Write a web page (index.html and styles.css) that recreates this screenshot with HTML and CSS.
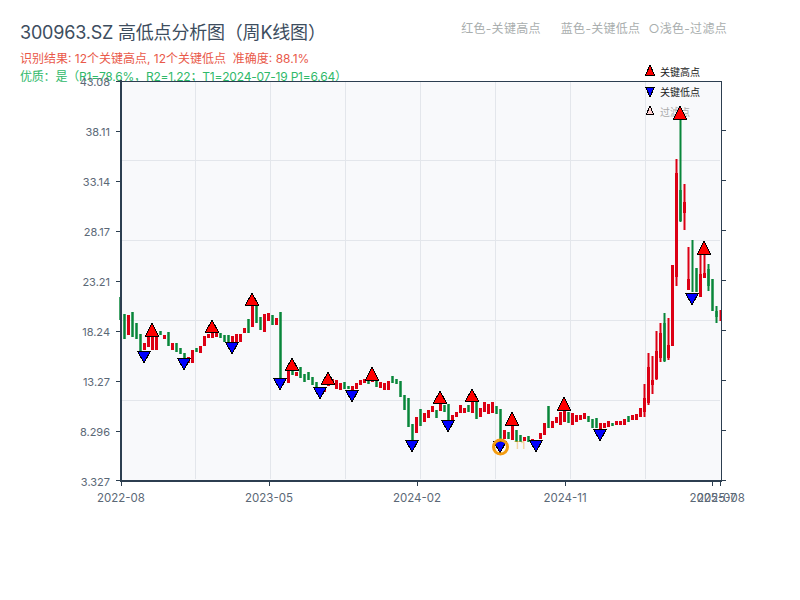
FILE: index.html
```html
<!DOCTYPE html>
<html lang="zh-CN">
<head>
    <meta charset="UTF-8">
    <meta name="viewport" content="width=device-width, initial-scale=1.0">
    <title>300963.SZ 高低点分析图</title>
    <link rel="stylesheet" href="styles.css">
</head>
<body>
    <div class="page">
        <div class="header">
            <div class="title-row">
                <h1 class="title">300963.SZ 高低点分析图（周K线图）</h1>
                <div class="top-legend">
                    <span>红色-关键高点</span>
                    <span>蓝色-关键低点</span>
                    <span class="filter-note">○浅色-过滤点</span>
                </div>
            </div>
            <div class="result-line">识别结果: 12个关键高点, 12个关键低点 &nbsp;准确度: 88.1%</div>
            <div class="quality-line">优质：是（R1=78.6%，R2=1.22；T1=2024-07-19 P1=6.64）</div>
        </div>

        <svg class="chart" width="800" height="520" viewBox="0 80 800 520">
            <!-- plot background and grid -->
            <rect class="plot-bg" x="121" y="81" width="600" height="399"/>
            <path class="grid" d="M122 160.5H720M122 240.5H720M122 320.5H720M122 400.5H720M195.5 82V479M270.5 82V479M345.5 82V479M420.5 82V479M495.5 82V479M570.5 82V479M645.5 82V479"/>

            <!-- inner legend -->
            <polygon class="mark-up" points="650,65 654.500,75 645.500,75"/>
            <text class="legend-text" x="660" y="76">关键高点</text>
            <polygon class="mark-down" points="645.500,87 654.500,87 650,97"/>
            <text class="legend-text" x="660" y="96">关键低点</text>
            <polygon class="mark-filter" points="650,106 653.500,114 646.500,114"/>
            <text class="legend-text legend-muted" x="660" y="116">过滤点</text>

            <!-- candles -->
            <g class="candles-green">
                <path class="wick" d="M664.500 313V362M680.500 112V222M692.500 240V292M708.500 264V291M716.500 306V323"/>
                <path class="body" d="M120.500 297V320M124.500 314V339M132.500 312V337M136.500 323V339M140.500 334V352M160.500 331V335M168.500 332V346M176.500 343V352M180.500 348V354M184.500 353V360M196.500 348V352M220.500 333V338M224.500 335V342M228.500 335V343M248.500 319V333M256.500 306V323M260.500 317V330M272.500 315V325M280.500 312V378M292.500 370V375M300.500 367V378M304.500 374V382M308.500 372V380M312.500 377V385M316.500 382V387M344.500 382V389M348.500 386V389M368.500 380V384M376.500 380V387M392.500 376V383M396.500 379V384M400.500 381V397M404.500 395V410M408.500 398V427M412.500 424V440M420.500 409V426M436.500 410V418M444.500 405V412M448.500 404V420M468.500 405V412M476.500 402V419M496.500 406V414M500.500 409V440M508.500 432V439M516.500 430V442M520.500 435V442M528.500 436V442M548.500 406V428M568.500 412V423M588.500 416V422M592.500 419V428M596.500 418V428M612.500 423V426M628.500 416V422M664.500 323V361M680.500 190V221M696.500 268V292M708.500 269V286M712.500 279V311M716.500 311V317"/>
            </g>
            <g class="candles-red">
                <path class="wick" d="M644.500 384V417M648.500 353V405M652.500 356V394M656.500 331V380M660.500 323V362M668.500 318V360M676.500 159V286M684.500 184V230M688.500 247V290M700.500 255V297M704.500 250V278M720.500 310V321"/>
                <path class="body" d="M128.500 315V335M144.500 343V350M148.500 335V347M152.500 330V350M156.500 335V350M164.500 335V339M172.500 343V350M188.500 357V363M192.500 350V363M200.500 346V353M204.500 336V346M208.500 334V338M212.500 330V338M216.500 332V337M232.500 336V343M236.500 334V342M240.500 334V342M244.500 328V333M252.500 300V327M264.500 314V332M268.500 313V321M276.500 318V325M288.500 370V383M296.500 372V376M320.500 387V392M324.500 387V392M328.500 380V386M332.500 379V384M336.500 380V389M340.500 383V390M352.500 386V390M356.500 383V389M360.500 380V385M364.500 379V383M372.500 379V382M380.500 382V388M384.500 383V390M388.500 381V390M416.500 417V433M424.500 413V422M428.500 410V418M432.500 406V412M440.500 402V411M452.500 415V422M456.500 412V417M460.500 405V413M464.500 408V413M472.500 402V413M480.500 408V417M484.500 402V412M488.500 404V414M492.500 402V413M504.500 430V439M512.500 425V440M524.500 437V441M532.500 439V443M540.500 433V439M544.500 423V435M552.500 421V428M556.500 417V423M560.500 412V425M564.500 410V422M572.500 413V425M576.500 415V422M580.500 415V420M584.500 413V419M600.500 423V430M604.500 423V428M608.500 421V427M616.500 421V425M620.500 421V425M624.500 419V425M632.500 415V420M636.500 414V420M640.500 408V417M644.500 398V412M648.500 367V403M652.500 380V385M656.500 351V379M660.500 333V358M668.500 345V358M672.500 265V346M676.500 173V277M684.500 202V213M688.500 279V290M700.500 274V297M704.500 273V278"/>
            </g>

            <!-- key highs -->
            <polygon class="mark-up" points="152,323 158.500,336 145.500,336"/>
            <polygon class="mark-up" points="212,320 218.500,332 205.500,332"/>
            <polygon class="mark-up" points="252,293 258.500,305 245.500,305"/>
            <polygon class="mark-up" points="292,358 298.500,370 285.500,370"/>
            <polygon class="mark-up" points="328,372 334.500,384 321.500,384"/>
            <polygon class="mark-up" points="372,367 378.500,380 365.500,380"/>
            <polygon class="mark-up" points="440,391 446.500,403 433.500,403"/>
            <polygon class="mark-up" points="472,389 478.500,401 465.500,401"/>
            <polygon class="mark-up" points="512,412 518.500,425 505.500,425"/>
            <polygon class="mark-up" points="564,397 570.500,410 557.500,410"/>
            <polygon class="mark-up" points="680,106 686.500,119 673.500,119"/>
            <polygon class="mark-up" points="704,241 710.500,254 697.500,254"/>

            <!-- key lows -->
            <polygon class="mark-down" points="137.500,351 150.500,351 144,363"/>
            <polygon class="mark-down" points="177.500,358 190.500,358 184,370"/>
            <polygon class="mark-down" points="225.500,342 238.500,342 232,354"/>
            <polygon class="mark-down" points="273.500,378 286.500,378 280,390"/>
            <polygon class="mark-down" points="313.500,387 326.500,387 320,399"/>
            <polygon class="mark-down" points="345.500,390 358.500,390 352,402"/>
            <polygon class="mark-down" points="405.500,440 418.500,440 412,452"/>
            <polygon class="mark-down" points="441.500,420 454.500,420 448,432"/>
            <polygon class="mark-down" points="493.500,441 506.500,441 500,453"/>
            <polygon class="mark-down" points="529.500,440 542.500,440 536,452"/>
            <polygon class="mark-down" points="593.500,429 606.500,429 600,441"/>
            <polygon class="mark-down" points="685.500,293 698.500,293 692,305"/>

            <!-- T1 point -->
            <circle class="t1-ring" cx="500.500" cy="447" r="7"/>
            <text class="t1-label" x="514" y="449">T1</text>

            <!-- axes -->
            <path class="axis-thin" d="M121 81.500H721M721.500 81V480M722 130.500H726M722 180.500H726M722 230.500H726M722 280.500H726M722 330.500H726M722 380.500H726M722 430.500H726M722 480.500H726"/>
            <path class="axis-thin" d="M116 81.500H121M116 131.500H121M116 181.500H121M116 231.500H121M116 281.500H121M116 331.500H121M116 381.500H121M116 431.500H121M116 480.500H121"/>
            <path class="axis-thin" d="M121.500 481V486M269.500 481V486M417.500 481V486M565.500 481V486M712.500 481V486M720.500 481V486"/>
            <path class="axis-thick" d="M121 80V481H722"/>

            <g class="y-labels">
                <text x="110" y="86">43.08</text>
                <text x="110" y="136">38.11</text>
                <text x="110" y="186">33.14</text>
                <text x="110" y="236">28.17</text>
                <text x="110" y="286">23.21</text>
                <text x="110" y="336">18.24</text>
                <text x="110" y="386">13.27</text>
                <text x="110" y="436">8.296</text>
                <text x="110" y="486">3.327</text>
            </g>
            <g class="x-labels">
                <text x="121" y="502">2022-08</text>
                <text x="269" y="502">2023-05</text>
                <text x="417" y="502">2024-02</text>
                <text x="565" y="502">2024-11</text>
                <text x="713" y="502">2025-07</text>
                <text x="721" y="502">2025-08</text>
            </g>
        </svg>
    </div>
</body>
</html>
```

FILE: styles.css
```css
body {
    margin: 0;
    background: #fff;
    font-family: "Inter", "Noto Sans CJK SC", sans-serif;
}
.page {
    width: 800px;
    height: 600px;
    overflow: hidden;
}
.header {
    height: 80px;
    box-sizing: border-box;
    padding: 20px 0 0 20px;
}
.title-row {
    display: flex;
    justify-content: space-between;
    height: 30px;
}
.title {
    margin: 0;
    font-size: 18px;
    font-weight: 400;
    line-height: 26px;
    letter-spacing: -0.2px;
    color: #3d4d5e;
}
.top-legend {
    display: flex;
    gap: 20px;
    padding: 0 73px 0 0;
    font-size: 12px;
    line-height: 17px;
    letter-spacing: 0.3px;
    color: #a9aeae;
}
.filter-note {
    margin-left: -12px;
}
.result-line {
    font-size: 12px;
    line-height: 18px;
    color: #e9594a;
}
.quality-line {
    font-size: 12px;
    line-height: 18px;
    letter-spacing: -0.2px;
    color: #2fb96a;
}
.chart {
    display: block;
    overflow: visible;
}
.plot-bg {
    fill: #f8f9fb;
}
.grid {
    fill: none;
    stroke: #e3e6eb;
    stroke-width: 1;
}
.wick {
    fill: none;
    stroke-width: 2;
}
.body {
    fill: none;
    stroke-width: 2.500;
}
.candles-green {
    stroke: #08863a;
}
.candles-red {
    stroke: #dc0014;
}
.candles-red .body {
    stroke-width: 3;
}
.mark-up, .mark-down, .mark-filter {
    stroke: #000;
    stroke-width: 1;
    shape-rendering: crispEdges;
}
.mark-up {
    fill: #ff0000;
}
.mark-down {
    fill: #0000ff;
}
.mark-filter {
    fill: #ffd0d0;
}
.legend-text {
    font-size: 10px;
    fill: #222;
}
.legend-muted {
    fill: #aaa;
}
.t1-ring {
    fill: none;
    stroke: #f39c12;
    stroke-width: 3;
}
.t1-label {
    font-size: 11px;
    fill: #f39c12;
    opacity: 0.5;
}
.axis-thin {
    fill: none;
    stroke: #2c3e50;
    stroke-width: 1;
}
.axis-thick {
    fill: none;
    stroke: #2c3e50;
    stroke-width: 2;
}
.y-labels text {
    font-size: 11px;
    fill: #5b6876;
    text-anchor: end;
}
.x-labels text {
    font-size: 11.500px;
    fill: #5b6876;
    text-anchor: middle;
}
```
